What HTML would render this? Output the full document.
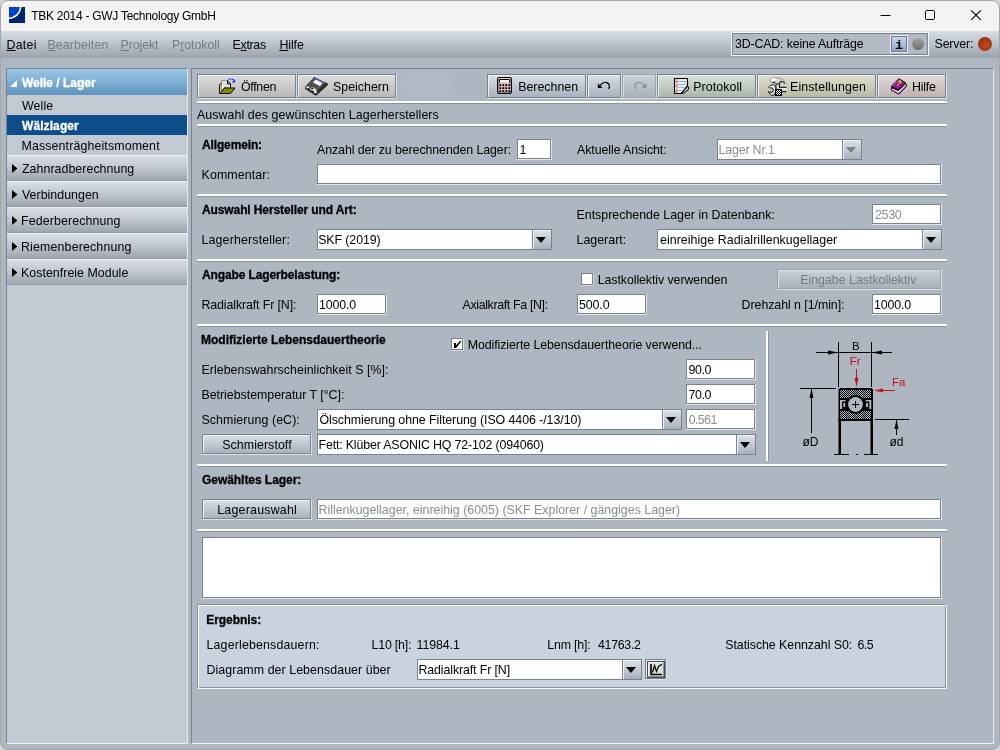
<!DOCTYPE html>
<html lang="de">
<head>
<meta charset="utf-8">
<title>TBK 2014 - GWJ Technology GmbH</title>
<style>
*{box-sizing:border-box;margin:0;padding:0}
html,body{width:1000px;height:750px;overflow:hidden;background:#d6d6d6}
body{font-family:"Liberation Sans",sans-serif;font-size:12.4px;color:#000;position:relative}
.win *{position:absolute}
.win{position:absolute;left:0;top:0;width:1000px;height:750px;border:1px solid #a6a6a6;border-radius:8px;background:#adb6c1;overflow:hidden}
.o{left:-1px;top:-1px;width:0;height:0;will-change:transform}
.t{white-space:nowrap;line-height:16px;height:16px}
.win u{position:static;text-decoration:underline;text-underline-offset:1px;text-decoration-thickness:1px}
.title{left:1px;top:1px;width:998px;height:30px;background:#f3f3f3}
.menu{left:1px;top:31px;width:998px;height:27px;background:linear-gradient(#d7dce3 0%,#c4cad2 35%,#a9b0ba 78%,#9aa2ac 100%)}
/* panels */
.pan{border:1px solid #78828f;border-right-color:#e4e8ed;border-bottom-color:#f0f2f5}
.left{left:6px;top:68px;width:182px;height:676px;background:#c2c9d2}
.right{left:191px;top:68px;width:803px;height:676px}
.hdr{left:7px;width:180px;height:26px;background:linear-gradient(#d9dde4 0%,#c6cbd3 40%,#a9afb9 85%,#9fa5b0 100%);border-top:1px solid #eef0f3;border-bottom:1px solid #959ba6}
.hdr.act{background:linear-gradient(#9dc6e4 0%,#7fb0d5 45%,#5f93bb 100%);border:0}
.sel{left:7px;top:115px;width:180px;height:20px;background:#0f4c8a}
/* separators */
.sep{left:197px;width:750px;height:3px;border-bottom:1px solid #8a94a1;background:#fff}
.vsep{width:3px;border-right:1px solid #8a94a1;background:#fff}
/* buttons */
.btn{border-right:1px solid #dde1e6;border-bottom:1px solid #dde1e6}
.btn>i{left:0;top:0;right:0;bottom:0;border:1px solid #79828e;background:linear-gradient(#dcdcdc,#b8b8b8);box-shadow:inset 1px 1px 0 #efefef}
.btn.c1>i{background:linear-gradient(#d9dfe7,#a9b1be)}
.btn.c2>i{background:linear-gradient(#d9e2da,#aab6ad)}
.btn.c3>i{background:linear-gradient(#dfdfd0,#b9b9a4)}
.btn.c4>i{background:linear-gradient(#e2dad9,#bfb3b1)}
.btn.off>i{border-color:#98a1ad;background:linear-gradient(#c9d0d9,#a9b1bd);box-shadow:inset 1px 1px 0 #d9dee5}
.inp{height:21px;border-right:1px solid #e3e7eb;border-bottom:1px solid #e3e7eb}
.inp>i{left:0;top:0;right:0;bottom:0;border:1px solid #79828e;background:#fff}
.combo{height:21px;background:#fff;border:1px solid #79828e}
.arrow{top:0;right:0;width:19px;height:19px;border-left:1px solid #79828e;background:linear-gradient(#dce2e9,#a8b0bc);box-shadow:inset 1px 1px 0 #eef1f4}
.arrow:after{content:"";position:absolute;left:3px;top:7px;border-top:6px solid #000;border-left:5px solid transparent;border-right:5px solid transparent}
.arrow.d:after{border-top-color:#808080}
.chk{width:13px;height:13px;border-right:1px solid #d3d8df;border-bottom:1px solid #d3d8df}
.chk>i{left:0;top:0;right:0;bottom:0;background:#fff;border:1px solid #77818e}
.res{left:197px;top:604px;width:750px;height:85px;background:#c8d3df;border:1px solid #8792a0;border-right-color:#f4f6f8;border-bottom-color:#f4f6f8;box-shadow:inset 1px 1px 0 #fdfdfe,inset -1px -1px 0 #8a95a3}
svg{overflow:visible}
</style>
</head>
<body>
<div class="win"><div class="o">
  <div class="title"></div>
  <div class="menu"></div>
  <!-- window icon -->
  <svg style="left:9px;top:7px" width="16" height="16" viewBox="0 0 16 16"><rect width="16" height="16" fill="#00246e"/><path d="M0 0H11.5A11.5 11.5 0 0 1 0 10.5Z" fill="#0040d0"/><path d="M11.7 0A12 12 0 0 1 0 11.2" fill="none" stroke="#fff" stroke-width="1.500"/></svg>
  <!-- window controls -->
  <svg style="left:870px;top:1px" width="128" height="30" viewBox="0 0 128 30"><g fill="none" stroke="#000" stroke-width="1"><path d="M10.5 14.5H20.5"/><rect x="55.5" y="9.5" width="9" height="9" rx="1.2"/><path d="M101.200 9.300L110.800 18.900M110.800 9.300L101.200 18.900" stroke-width="1.150"/></g></svg>
  <!-- status box -->
  <div style="left:731px;top:32px;width:198px;height:24px;border:1px solid #f6f7f9"><i style="left:0;top:0;right:0;bottom:0;border:1px solid #7a8491;background:#b0b9c4"></i></div>
  <div style="left:890px;top:35px;width:18px;height:18px;border:1px solid #e9edf3"><i style="left:0;top:0;right:0;bottom:0;border:1px solid #6f7a8c;background:linear-gradient(#c9d6f0,#8fa3c9)"></i></div>
  <div class="t" style="left:893px;top:38px;width:12px;text-align:center;font-family:'Liberation Mono',monospace;font-weight:bold;font-size:13.5px">i</div>
  <div style="left:912px;top:38px;width:12px;height:12px;border-radius:50%;background:linear-gradient(#a3a3a3,#6c6c6c)"></div>
  <div style="left:978px;top:37px;width:14px;height:14px;border-radius:50%;background:radial-gradient(circle at 58% 58%,#c64a1a 0%,#a83a18 45%,#8a3018 80%,#7c2c1a 100%)"></div>

  <div class="pan left"></div>
  <div class="hdr act" style="top:69px"><svg style="left:3px;top:11px" width="7" height="7"><path d="M0 7H7V0Z" fill="#fff"/></svg></div>
  <div class="sel"></div>
  <div class="hdr" style="top:155px"><svg style="left:5px;top:8px" width="6" height="9"><path d="M0 0L5.400 4.500L0 9Z" fill="#000"/></svg></div>
  <div class="hdr" style="top:181px"><svg style="left:5px;top:8px" width="6" height="9"><path d="M0 0L5.400 4.500L0 9Z" fill="#000"/></svg></div>
  <div class="hdr" style="top:207px"><svg style="left:5px;top:8px" width="6" height="9"><path d="M0 0L5.400 4.500L0 9Z" fill="#000"/></svg></div>
  <div class="hdr" style="top:233px"><svg style="left:5px;top:8px" width="6" height="9"><path d="M0 0L5.400 4.500L0 9Z" fill="#000"/></svg></div>
  <div class="hdr" style="top:259px"><svg style="left:5px;top:8px" width="6" height="9"><path d="M0 0L5.400 4.500L0 9Z" fill="#000"/></svg></div>

  <div class="pan right"></div>
  <!-- toolbar -->
  <div class="btn" style="left:197px;top:74px;width:100px;height:25px"><i></i></div>
  <div class="btn" style="left:297px;top:74px;width:100px;height:25px"><i></i></div>
  <div class="btn c1" style="left:487px;top:74px;width:100px;height:25px"><i></i></div>
  <div class="btn c1" style="left:587px;top:74px;width:35px;height:25px"><i></i></div>
  <div class="btn c1 off" style="left:622px;top:74px;width:35px;height:25px"><i></i></div>
  <div class="btn c2" style="left:657px;top:74px;width:100px;height:25px"><i></i></div>
  <div class="btn c3" style="left:757px;top:74px;width:120px;height:25px"><i></i></div>
  <div class="btn c4" style="left:877px;top:74px;width:70px;height:25px"><i></i></div>
  <div style="left:400px;top:72px;width:52px;height:25px;border-radius:12px;background:rgba(255,255,255,.06)"></div>
    <!-- open -->
  <svg style="left:219px;top:78px" width="17" height="17" viewBox="0 0 17 17">
    <path d="M2.5 2.5H8.5L11.5 6V10H5L2.5 13Z" fill="#fff" stroke="#8c8c8c" stroke-width="1"/>
    <path d="M4 4.5H8M4 6.5H9M4 8.5H9" stroke="#c9c9c9" stroke-width="1"/>
    <path d="M8.5 2.5V6H11.5Z" fill="#fff" stroke="#000" stroke-width="1"/>
    <path d="M11.5 6V10" stroke="#000" stroke-width="1"/>
    <path d="M0.5 6.5V15.5H11.5" fill="none" stroke="#000" stroke-width="1"/>
    <path d="M1.5 7V15" stroke="#d6d040" stroke-width="1.2"/>
    <path d="M5.5 10.5H15.5L11.5 15H1.5Z" fill="#8c8c00"/>
    <path d="M0.8 6.5L2.5 5.5" stroke="#000" stroke-width="1"/>
    <path d="M5 10H16L11.5 15.5" fill="none" stroke="#000" stroke-width="1"/>
    <path d="M1.8 14.8L5.2 10.3" stroke="#000" stroke-width="1"/>
    <path d="M9.5 2C10.5 0.3 13 0.3 14.5 2.2" fill="none" stroke="#2030e0" stroke-width="1.200" stroke-dasharray="2.600 0.700"/>
    <path d="M16.2 1.2V4.6H12.8Z" fill="#1020f0"/>
  </svg>
  <!-- save -->
  <svg style="left:304px;top:76px" width="25" height="20" viewBox="0 0 25 20">
    <path d="M10.500 1L23.600 7.500L12 18.800L1 11.300Z" fill="#505050"/>
    <path d="M10.500 1L1 11.300" stroke="#2a1030" stroke-width="1" stroke-dasharray="1 1"/>
    <path d="M1 11.300L1.400 13L12 19.800L24 8.800L23.600 7.500L12 18.400Z" fill="#0c0c0c"/>
    <path d="M12 18.400L23.600 7.500L21.800 6.600L10.800 17.400Z" fill="#2c2c2c"/>
    <path d="M12.400 2.800L19.200 6.200L15.800 10L9 6.600Z" fill="#fff"/>
    <path d="M12.400 2.600L19.400 6L18.500 7.100L11.500 3.600Z" fill="#3848f0"/>
    <path d="M2 11.300L4.200 10.300L5.600 11.300L3.600 12.500Z" fill="#fff"/>
    <path d="M5.400 12.600L8.600 11L12.800 13.800L10.600 16.400Z" fill="#dcdcdc"/>
    <path d="M6.600 12.300L8.300 11.500L9.700 12.500L8 13.300Z" fill="#111"/>
    <path d="M4.400 12.200L5.600 13.400M8.400 14.800L9.600 16.200" stroke="#111" stroke-width="1.100"/>
    <path d="M10 16.200L11.800 17.400L13.200 16L11.400 14.800Z" fill="#fff"/>
    <path d="M14.600 11.600L18 8.200" stroke="#9a9a9a" stroke-width="0.800" stroke-dasharray="0.800 0.800"/>
  </svg>
  <!-- calc -->
  <svg style="left:497px;top:77px" width="15" height="17" viewBox="0 0 15 17">
    <rect x="0.6" y="0.6" width="13.8" height="15.8" rx="1.6" fill="#d3aeb2" stroke="#000" stroke-width="1.2"/>
    <path d="M1.5 1.5H13.5" stroke="#ecd6d8" stroke-width="1"/>
    <rect x="2.5" y="2.5" width="10" height="3" fill="#fff"/>
    <path d="M2.5 5.5V2.5H12.5V5.5" fill="none" stroke="#000" stroke-width="1"/>
    <g fill="#000"><rect x="2.3" y="7.3" width="1.8" height="1.8" rx=".5"/><rect x="5.3" y="7.3" width="1.8" height="1.8" rx=".5"/><rect x="8.3" y="7.3" width="1.8" height="1.8" rx=".5"/><rect x="11.3" y="7.3" width="1.8" height="1.8" rx=".5"/>
    <rect x="2.3" y="10.3" width="1.8" height="1.8" rx=".5"/><rect x="5.3" y="10.3" width="1.8" height="1.8" rx=".5"/><rect x="8.3" y="10.3" width="1.8" height="1.8" rx=".5"/><rect x="11.3" y="10.3" width="1.8" height="1.8" rx=".5"/>
    <rect x="2.3" y="13.3" width="1.8" height="1.8" rx=".5"/><rect x="5.3" y="13.3" width="1.8" height="1.8" rx=".5"/><rect x="8.3" y="13.3" width="1.8" height="1.8" rx=".5"/><rect x="11.3" y="13.3" width="1.8" height="1.8" rx=".5"/></g>
  </svg>
  <!-- undo / redo -->
  <svg style="left:597px;top:81px" width="14" height="9" viewBox="0 0 14 9"><path d="M0.800 2.200V7H5.600Z" fill="#000"/><path d="M3.200 4.600C5 1.200 10 0.200 12 3.400C12.800 5 12.400 6.600 11.400 7.800" fill="none" stroke="#000" stroke-width="1.200"/></svg>
  <svg style="left:634px;top:81px" width="14" height="9" viewBox="0 0 14 9"><path d="M12.400 2.200V7H7.600Z" fill="#8e8e8e"/><path d="M10 4.600C8.200 1.200 3.200 0.200 1.400 3.400C0.600 5 1 6.600 2 7.800" fill="none" stroke="#8e8e8e" stroke-width="1.200"/></svg>
  <!-- protokoll -->
  <svg style="left:674px;top:78px" width="16" height="16" viewBox="0 0 16 16">
    <path d="M0.5 0.5H13.5V8L7 15.5H0.5Z" fill="#f1e9e8"/>
    <path d="M4 3.5H13M4 6.5H13M4 9.5H11M4 12.5H8" stroke="#86c4f2" stroke-width="1.2"/>
    <path d="M1 3.5H2M1 8H2M1 12.5H2" stroke="#9ad0f5" stroke-width="1.2"/>
    <path d="M3 1V15" stroke="#f08088" stroke-width="1.2"/>
    <path d="M1.6 3.5H2.4M1.6 8H2.4M1.6 13H2.4" stroke="#222" stroke-width="1.2"/>
    <path d="M13.5 8L14.6 9V11.4L9 15.5H7Z" fill="#c2c2c2" stroke="#000" stroke-width="1"/>
    <path d="M7 15.5H0.5V0.5H13.5V8Z" fill="none" stroke="#000" stroke-width="1.1"/>
  </svg>
  <!-- einstellungen -->
  <svg style="left:768px;top:77px" width="19" height="20" viewBox="0 0 19 20">
    <path d="M2.6 1.4L6 0.8L12 1.2L15.6 3L17.4 6.6L16.4 6L14.8 4.4L12 4.6L11.4 7H7.6L7.2 5L4.4 5.4L2.8 4.6Z" fill="#d9d9d9" stroke="#555" stroke-width=".5"/>
    <path d="M3 1.6L6 1.2L9 1.6L5.6 4.6L3.2 4.2Z" fill="#fff"/>
    <path d="M4.4 5.6L7 5.2M11.6 6.4L12.2 4.8L14.8 4.6L16.8 6.6" fill="none" stroke="#000" stroke-width="1"/>
    <rect x="8.2" y="7" width="3.2" height="6.4" fill="#f2f2f2" stroke="#000" stroke-width="1"/>
    <path d="M9 7.4V13" stroke="#bdbdbd" stroke-width="1"/>
    <path d="M11.6 10.5H18.4V14.5H11.6Z" fill="#cfcfcf"/><path d="M11.6 11.6H18.4" stroke="#fff" stroke-width="1.4"/><path d="M11.6 10.3H18.4M11.6 14.7H18.4" stroke="#000" stroke-width="1"/>
    <path d="M0.6 10.4L2 8.6L5.4 7.8L7.6 9L8 13.4L6.6 17.8L3.6 18.6L1 16L0.4 14.6L4.2 15.6L5.4 13L4.6 11.2Z" fill="#e4e4e4" stroke="#000" stroke-width=".9"/>
    <path d="M1.2 10.2L4.4 9L6 9.6" stroke="#fff" stroke-width="1" fill="none"/>
    <rect x="7.500" y="12.500" width="6" height="6" fill="#fff" stroke="#000" stroke-width="1"/>
    <path d="M8 13h1v1h-1zM10 13h1v1h-1zM12 13h1v1h-1zM9 14h1v1h-1zM11 14h1v1h-1zM8 15h1v1h-1zM10 15h1v1h-1zM12 15h1v1h-1zM9 16h1v1h-1zM11 16h1v1h-1zM8 17h1v1h-1zM10 17h1v1h-1zM12 17h1v1h-1z" fill="#000"/>
  </svg>
  <!-- hilfe -->
  <svg style="left:890px;top:78px" width="18" height="18" viewBox="0 0 18 18">
    <path d="M1.4 9.6L8.4 12.6L16 5.6L16.6 8.4L8.8 16.2L1.4 12.2Z" fill="#e8e8e8" stroke="#000" stroke-width="1"/>
    <path d="M1.6 12L8.6 15.6L16.4 8" fill="none" stroke="#8c1a96" stroke-width="1"/>
    <path d="M8.8 0.8L15.4 4.6L8.4 11.8L1.2 8.4Z" fill="#98129e" stroke="#000" stroke-width="1"/>
    <path d="M2.2 8L9 1.4" stroke="#d9a8dc" stroke-width="1" stroke-dasharray="1 1"/>
    <path d="M1.4 8.4L2.4 9.8L3.4 9.4L4.4 10.8L5.4 10.4L6.4 11.8L7.4 11.4L8.4 12.4" fill="none" stroke="#000" stroke-width="1"/>
  </svg>
  <div class="t" style="left:896px;top:79px;font-weight:bold;font-size:8px;color:#f4e600;transform:skew(-20deg) rotate(8deg);line-height:10px;height:10px">?</div>

  <div class="sep" style="top:101px"></div>
  <div class="sep" style="top:124px"></div>
  <!-- sec1 -->
  <div class="inp" style="left:517px;top:139px;width:35px"><i></i></div>
  <div class="combo" style="left:717px;top:139px;width:145px"><div class="arrow d"></div></div>
  <div class="inp" style="left:317px;top:164px;width:625px"><i></i></div>
  <div class="sep" style="top:194px"></div>
  <!-- sec2 -->
  <div class="inp" style="left:872px;top:204px;width:70px"><i></i></div>
  <div class="combo" style="left:317px;top:229px;width:235px"><div class="arrow"></div></div>
  <div class="combo" style="left:657px;top:229px;width:285px"><div class="arrow"></div></div>
  <div class="sep" style="top:259px"></div>
  <!-- sec3 -->
  <div class="chk" style="left:581px;top:273px"><i></i></div>
  <div class="btn c1 off" style="left:777px;top:269px;width:165px;height:21px"><i></i></div>
  <div class="inp" style="left:317px;top:294px;width:70px"><i></i></div>
  <div class="inp" style="left:577px;top:294px;width:70px"><i></i></div>
  <div class="inp" style="left:872px;top:294px;width:70px"><i></i></div>
  <div class="sep" style="top:324px"></div>
  <!-- sec4 -->
  <div class="chk" style="left:451px;top:338px"><i></i></div>
  <svg style="left:453px;top:340px" width="9" height="9" viewBox="0 0 9 9"><path d="M1 3H3V5.300L7.200 0.800L8.200 1.800L3 8H1Z" fill="#000"/></svg>
  <div class="inp" style="left:686px;top:359px;width:70px"><i></i></div>
  <div class="inp" style="left:686px;top:384px;width:70px"><i></i></div>
  <div class="combo" style="left:317px;top:409px;width:365px"><div class="arrow"></div></div>
  <div class="inp" style="left:686px;top:409px;width:70px"><i></i></div>
  <div class="btn c1" style="left:202px;top:434px;width:110px;height:21px"><i></i></div>
  <div class="combo" style="left:317px;top:434px;width:439px"><div class="arrow"></div></div>
  <div class="vsep" style="left:766px;top:331px;height:130px"></div>
    <svg style="left:790px;top:335px" width="130" height="125" viewBox="790 335 130 125" font-family="'Liberation Sans',sans-serif">
    <defs><pattern id="hx" width="2" height="2" patternUnits="userSpaceOnUse"><rect width="2" height="2" fill="#adb6c1"/><rect width="1" height="1" fill="#000"/><rect x="1" y="1" width="1" height="1" fill="#000"/></pattern></defs>
    <g stroke="#000" stroke-width="1" fill="none">
      <path d="M838.5 342V387M871.5 342V387"/>
      <path d="M816 352.5H892"/>
      <path d="M800 388.500H836M811.500 389V433"/>
      <path d="M875 419.500H909M896.500 420V435"/>
      <path d="M834 454.500H849M864 454.500H878M856 454.500H858"/>
    </g>
    <g fill="#000">
      <path d="M838 352.500L828 350.500V354.500ZM872 352.500L882 350.500V354.500Z"/>
      <path d="M811.500 388.500L809.500 398H813.500ZM896.500 419.500L894.500 429H898.500Z"/>
      <rect x="838.500" y="418" width="2.500" height="37"/><rect x="870.500" y="418" width="2.500" height="37"/>
    </g>
    <path d="M840 388H871.500L873 389.500V421H838.500V389.500Z" fill="#000"/>
    <rect x="840" y="390" width="31" height="8" fill="url(#hx)"/>
    <rect x="840" y="411" width="31" height="8" fill="url(#hx)"/>
    <g fill="#adb6c1"><path d="M840 400H845.500V401.500H842V409H840Z"/><rect x="843.300" y="403" width="1.900" height="4"/><path d="M871.300 400H865.800V401.500H869.300V409H871.300Z"/><rect x="866.100" y="403" width="1.900" height="4"/></g>
    <circle cx="855.500" cy="404.500" r="9.400" fill="#000"/>
    <circle cx="855.500" cy="404.500" r="7.400" fill="#adb6c1"/>
    <path d="M852 404.500H859M855.500 401V408" stroke="#000" stroke-width="1"/>
    <g stroke="#c4101a" stroke-width="1" fill="#c4101a">
      <path d="M856.500 369V382M895 390.500H880"/>
      <path d="M856.500 387L854.500 378H858.500ZM874 390.500L883 388.500V392.500Z" stroke="none"/>
    </g>
    <g font-size="11.500" fill="#000"><text x="852" y="350">B</text><text x="802.500" y="445.500" font-size="12">øD</text><text x="889.500" y="445.500" font-size="12">ød</text></g>
    <g font-size="11.500" fill="#c4101a"><text x="849.800" y="365">Fr</text><text x="892" y="386">Fa</text></g>
  </svg>

  <div class="sep" style="top:464px"></div>
  <!-- sec5 -->
  <div class="btn c1" style="left:202px;top:499px;width:110px;height:21px"><i></i></div>
  <div class="inp" style="left:317px;top:499px;width:625px"><i></i></div>
  <div class="sep" style="top:529px"></div>
  <div class="inp" style="left:202px;top:537px;width:740px;height:62px"><i></i></div>
  <!-- result -->
  <div class="res"></div>
  <div class="combo" style="left:417px;top:659px;width:225px"><div class="arrow"></div></div>
  <div class="btn c1" style="left:645px;top:659px;width:22px;height:21px"><i></i></div>
    <svg style="left:647px;top:661px" width="18" height="17" viewBox="0 0 18 17"><rect x="0" y="0" width="18" height="17" fill="#4a4a4a"/><rect x="1" y="1" width="15.500" height="14.500" fill="#dcdcdc"/><path d="M1.500 15V1.500H16" fill="none" stroke="#f2f2f2" stroke-width="1"/><path d="M4 3V13.500H15" fill="none" stroke="#000" stroke-width="1.600"/><path d="M5.500 11.500L7.500 4.500L9.500 10.500L11.500 5.500L15 3.300" fill="none" stroke="#000" stroke-width="1.200"/></svg>

<div class="t" style="left:31.2px;top:8px;letter-spacing:-0.27px;font-size:12px">TBK 2014 - GWJ Technology GmbH</div>
<div class="t" style="left:6.4px;top:37px;letter-spacing:0.30px"><u>D</u>atei</div>
<div class="t" style="left:47.4px;top:37px;letter-spacing:0.11px;color:#767b83"><u>B</u>earbeiten</div>
<div class="t" style="left:120.6px;top:37px;letter-spacing:-0.10px;color:#767b83"><u>P</u>rojekt</div>
<div class="t" style="left:172.0px;top:37px;letter-spacing:-0.07px;color:#767b83">P<u>r</u>otokoll</div>
<div class="t" style="left:232.6px;top:37px;letter-spacing:-0.32px">E<u>x</u>tras</div>
<div class="t" style="left:279.4px;top:37px;letter-spacing:-0.10px"><u>H</u>ilfe</div>
<div class="t" style="left:735.0px;top:36px;letter-spacing:-0.17px">3D-CAD: keine Aufträge</div>
<div class="t" style="left:934.6px;top:36px;letter-spacing:-0.20px">Server:</div>
<div class="t" style="left:22.0px;top:75px;letter-spacing:-0.02px;font-size:12.0px;font-weight:bold;-webkit-text-stroke:0.3px;color:#fff">Welle / Lager</div>
<div class="t" style="left:22.0px;top:98px;letter-spacing:0.12px">Welle</div>
<div class="t" style="left:22.0px;top:118px;letter-spacing:0.09px;font-size:12.0px;font-weight:bold;-webkit-text-stroke:0.3px;color:#fff">Wälzlager</div>
<div class="t" style="left:21.5px;top:138px;letter-spacing:0.12px">Massenträgheitsmoment</div>
<div class="t" style="left:22.0px;top:161px;letter-spacing:0.04px">Zahnradberechnung</div>
<div class="t" style="left:22.0px;top:187px;letter-spacing:0.02px">Verbindungen</div>
<div class="t" style="left:21.0px;top:213px;letter-spacing:0.11px">Federberechnung</div>
<div class="t" style="left:21.0px;top:239px;letter-spacing:0.15px">Riemenberechnung</div>
<div class="t" style="left:21.0px;top:265px;letter-spacing:0.03px">Kostenfreie Module</div>
<div class="t" style="left:241.0px;top:79px;letter-spacing:-0.32px">Öffnen</div>
<div class="t" style="left:333.0px;top:79px">Speichern</div>
<div class="t" style="left:518.2px;top:79px">Berechnen</div>
<div class="t" style="left:693.3px;top:79px;letter-spacing:0.06px">Protokoll</div>
<div class="t" style="left:790.0px;top:79px;letter-spacing:0.12px">Einstellungen</div>
<div class="t" style="left:911.9px;top:79px;letter-spacing:-0.20px">Hilfe</div>
<div class="t" style="left:197.0px;top:107px;letter-spacing:0.07px">Auswahl des gewünschten Lagerherstellers</div>
<div class="t" style="left:202.0px;top:137px;letter-spacing:-0.14px;font-size:12.0px;font-weight:bold;-webkit-text-stroke:0.3px">Allgemein:</div>
<div class="t" style="left:317.0px;top:142px;letter-spacing:-0.09px">Anzahl der zu berechnenden Lager:</div>
<div class="t" style="left:519.5px;top:142px">1</div>
<div class="t" style="left:577.0px;top:142px;letter-spacing:-0.08px">Aktuelle Ansicht:</div>
<div class="t" style="left:718.5px;top:142px;letter-spacing:-0.17px;color:#8b8c8e">Lager Nr.1</div>
<div class="t" style="left:201.5px;top:167px;letter-spacing:0.12px">Kommentar:</div>
<div class="t" style="left:202.0px;top:202px;letter-spacing:-0.11px;font-size:12.0px;font-weight:bold;-webkit-text-stroke:0.3px">Auswahl Hersteller und Art:</div>
<div class="t" style="left:576.5px;top:207px">Entsprechende Lager in Datenbank:</div>
<div class="t" style="left:875.0px;top:207px;letter-spacing:-0.27px;color:#8b8c8e">2530</div>
<div class="t" style="left:201.5px;top:232px;letter-spacing:0.15px">Lagerhersteller:</div>
<div class="t" style="left:318.2px;top:232px;letter-spacing:-0.10px">SKF (2019)</div>
<div class="t" style="left:576.5px;top:232px;letter-spacing:0.01px">Lagerart:</div>
<div class="t" style="left:660.0px;top:232px;letter-spacing:0.05px">einreihige Radialrillenkugellager</div>
<div class="t" style="left:202.0px;top:267px;letter-spacing:-0.12px;font-size:12.0px;font-weight:bold;-webkit-text-stroke:0.3px">Angabe Lagerbelastung:</div>
<div class="t" style="left:597.7px;top:272px;letter-spacing:-0.08px">Lastkollektiv verwenden</div>
<div class="t" style="left:800.2px;top:272px;letter-spacing:-0.01px;color:#767b83">Eingabe Lastkollektiv</div>
<div class="t" style="left:201.5px;top:297px;letter-spacing:-0.12px">Radialkraft Fr [N]:</div>
<div class="t" style="left:319.0px;top:297px;letter-spacing:-0.16px">1000.0</div>
<div class="t" style="left:462.5px;top:297px;letter-spacing:-0.35px">Axialkraft Fa [N]:</div>
<div class="t" style="left:579.0px;top:297px;letter-spacing:-0.12px">500.0</div>
<div class="t" style="left:741.6px;top:297px;letter-spacing:-0.06px">Drehzahl n [1/min]:</div>
<div class="t" style="left:874.0px;top:297px;letter-spacing:-0.16px">1000.0</div>
<div class="t" style="left:201.0px;top:332px;font-size:12.0px;font-weight:bold;-webkit-text-stroke:0.3px">Modifizierte Lebensdauertheorie</div>
<div class="t" style="left:467.7px;top:337px;letter-spacing:-0.08px">Modifizierte Lebensdauertheorie verwend...</div>
<div class="t" style="left:201.5px;top:362px;letter-spacing:0.03px">Erlebenswahrscheinlichkeit S [%]:</div>
<div class="t" style="left:688.6px;top:362px;letter-spacing:-0.40px">90.0</div>
<div class="t" style="left:201.5px;top:387px;letter-spacing:-0.03px">Betriebstemperatur T [°C]:</div>
<div class="t" style="left:688.6px;top:387px;letter-spacing:-0.40px">70.0</div>
<div class="t" style="left:201.5px;top:412px;letter-spacing:0.08px">Schmierung (eC):</div>
<div class="t" style="left:319.4px;top:412px;letter-spacing:-0.07px">Ölschmierung ohne Filterung (ISO 4406 -/13/10)</div>
<div class="t" style="left:688.7px;top:412px;letter-spacing:-0.60px;color:#8b8c8e">0.561</div>
<div class="t" style="left:222.2px;top:437px;letter-spacing:0.07px">Schmierstoff</div>
<div class="t" style="left:318.5px;top:437px;letter-spacing:-0.16px">Fett: Klüber ASONIC HQ 72-102 (094060)</div>
<div class="t" style="left:202.0px;top:472px;letter-spacing:-0.05px;font-size:12.0px;font-weight:bold;-webkit-text-stroke:0.3px">Gewähltes Lager:</div>
<div class="t" style="left:217.2px;top:502px;letter-spacing:0.23px">Lagerauswahl</div>
<div class="t" style="left:318.5px;top:502px;color:#8b8c8e">Rillenkugellager, einreihig (6005) (SKF Explorer / gängiges Lager)</div>
<div class="t" style="left:206.2px;top:612px;letter-spacing:-0.05px;font-size:12.0px;font-weight:bold;-webkit-text-stroke:0.3px">Ergebnis:</div>
<div class="t" style="left:206.5px;top:637px;letter-spacing:0.16px">Lagerlebensdauern:</div>
<div class="t" style="left:371.5px;top:637px;letter-spacing:-0.19px">L10 [h]:</div>
<div class="t" style="left:416.5px;top:637px;letter-spacing:-0.08px">11984.1</div>
<div class="t" style="left:547.2px;top:637px;letter-spacing:-0.17px">Lnm [h]:</div>
<div class="t" style="left:598.0px;top:637px;letter-spacing:-0.30px">41763.2</div>
<div class="t" style="left:725.2px;top:637px;letter-spacing:-0.05px">Statische Kennzahl S0:</div>
<div class="t" style="left:857.5px;top:637px;letter-spacing:-0.60px">6.5</div>
<div class="t" style="left:206.5px;top:662px;letter-spacing:0.06px">Diagramm der Lebensdauer über</div>
<div class="t" style="left:418.5px;top:662px;letter-spacing:-0.12px">Radialkraft Fr [N]</div>
</div></div>
</body>
</html>
